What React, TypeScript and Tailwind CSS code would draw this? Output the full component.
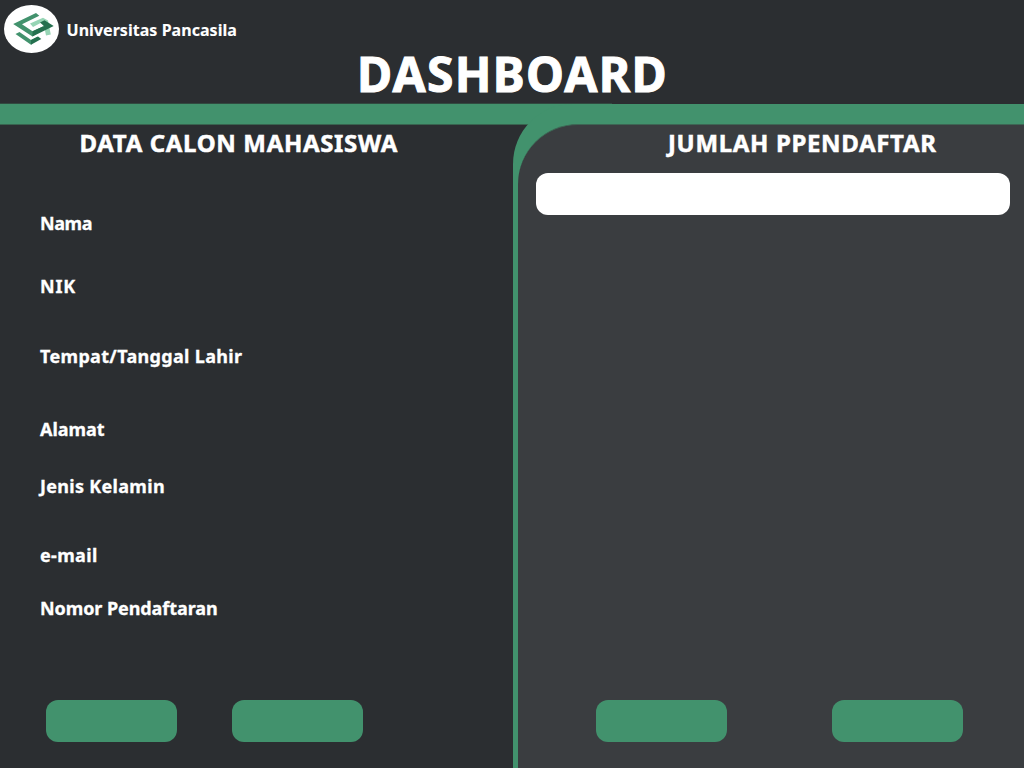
const fields = [
  { label: "Nama", row: "h-[63px] w-max tracking-[-0.4px]" },
  { label: "NIK", row: "h-[70px] w-max tracking-[0.8px]" },
  { label: "Tempat/Tanggal Lahir", row: "h-[73px] w-max tracking-[0.33px]" },
  { label: "Alamat", row: "h-[57px] w-max tracking-[-0.05px]" },
  { label: "Jenis Kelamin", row: "h-[69px] w-max tracking-[0.3px]" },
  { label: "e-mail", row: "h-[53px] w-max tracking-[0.35px]" },
  { label: "Nomor Pendaftaran", row: "h-[24px] w-max tracking-[-0.08px]" },
];

function Logo() {
  return (
    <svg className="block h-12 w-[55px]" viewBox="4 5 55 48">
      <ellipse cx="31.5" cy="29" rx="27.5" ry="24" fill="#fff" />
      <path d="M30 23.5 43 17.8 48 20.5 50.8 34.5 46 35.5 44.3 27 41.5 22.5 33 27Z" fill="#97d5b5" />
      <path d="M36 13 39.3 15.7 22 24.2 32.5 31.3 44 26 32.5 36.4 13.2 24Z" fill="#42926d" />
      <path d="M32.5 31.3 44 26 40 22.5 44.5 20.3 53.7 26 32.5 36.4Z" fill="#25704f" />
      <path d="M15.5 34 19.5 32 31 40 38 36.5 31 44.8Z" fill="#42926d" />
      <path d="M31 40 38 36.5 41.3 39 31 44.8Z" fill="#25704f" />
    </svg>
  );
}

function ActionButton() {
  return <button className="h-[42px] w-[131px] rounded-xl bg-[#42926d]" />;
}

export default function App() {
  return (
    <div className="flex h-[768px] w-[1024px] flex-col overflow-hidden bg-[#2b2e31] font-['Noto_Sans',sans-serif] font-bold text-white">
      <header className="h-[104px] shrink-0 pt-[5px]">
        <div className="flex h-12 items-center gap-[7.5px] pl-1">
          <Logo />
          <span className="pt-0.5 text-[16px] leading-6 tracking-[0.04px] whitespace-nowrap [-webkit-text-stroke:0.1px_white]">Universitas Pancasila</span>
        </div>
        <h1 className="h-[50px] pl-[357px] text-[48px] leading-[41px] tracking-[1.3px] whitespace-nowrap [-webkit-text-stroke:1px_white]">
          DASHBOARD
        </h1>
        <div className="h-px w-[612px] bg-[#314a40]" />
      </header>
      <div className="h-[21px] shrink-0 border-b border-[#38644f] bg-[#42926d]" />
      <main className="-mt-[21px] flex grow">
        <section className="w-[513px] pt-5">
          <h2 className="h-[87px] pt-1 pl-[79.5px] text-[24px] leading-[30px] tracking-[0.65px] whitespace-nowrap [-webkit-text-stroke:0.5px_white]">
            DATA CALON MAHASISWA
          </h2>
          <div className="pl-10 text-[18px] leading-6 whitespace-nowrap [-webkit-text-stroke:0.3px_white]">
            {fields.map((f) => (
              <div key={f.label} className={f.row}>{f.label}</div>
            ))}
          </div>
          <div className="flex gap-[55px] pt-20 pl-[46px]">
            <ActionButton />
            <ActionButton />
          </div>
        </section>
        <section className="grow rounded-tl-[60px] bg-[#42926d] pt-5 pl-[5px]">
          <div className="h-full rounded-tl-[60px] border-t border-[#3d6654] bg-[#3a3d40]">
            <h2 className="h-12 pt-[3px] pl-[150px] text-[24px] leading-[30px] tracking-[0.65px] whitespace-nowrap [-webkit-text-stroke:0.5px_white]">
              JUMLAH PPENDAFTAR
            </h2>
            <div className="ml-[18px] h-[42px] w-[474px] rounded-xl bg-white" />
            <div className="flex gap-[105px] pt-[485px] pl-[78px]">
              <ActionButton />
              <ActionButton />
            </div>
          </div>
        </section>
      </main>
    </div>
  );
}
